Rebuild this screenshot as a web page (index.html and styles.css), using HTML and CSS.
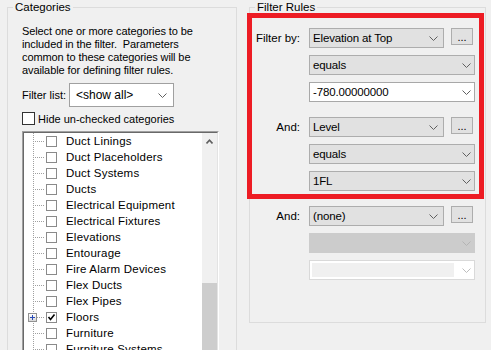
FILE: index.html
```html
<!DOCTYPE html>
<html lang="en">
<head>
    <meta charset="UTF-8">
    <title>Filters - Categories and Rules</title>
    <link rel="stylesheet" href="styles.css">
</head>
<body>
    <fieldset class="group categories">
        <legend>Categories</legend>
        <div class="group-body">
            <p class="hint">Select one or more categories to be<br>included in the filter.&nbsp; Parameters<br>common to these categories will be<br>available for defining filter rules.</p>
            <div class="filter-list">
                <span>Filter list:</span>
                <div class="select">
                    <span>&lt;show all&gt;</span>
                    <svg width="9" height="5" viewBox="0 0 9 5"><polyline points="0.5,0.5 4.5,4.5 8.5,0.5" fill="none" stroke="#606060"/></svg>
                </div>
            </div>
            <label class="check-row"><span class="box"></span>Hide un-checked categories</label>
            <div class="tree">
                <div class="tree-inner">
                    <ul class="tree-items">
                        <li><span class="cb"></span>Duct Linings</li>
                        <li><span class="cb"></span>Duct Placeholders</li>
                        <li><span class="cb"></span>Duct Systems</li>
                        <li><span class="cb"></span>Ducts</li>
                        <li><span class="cb"></span>Electrical Equipment</li>
                        <li><span class="cb"></span>Electrical Fixtures</li>
                        <li><span class="cb"></span>Elevations</li>
                        <li><span class="cb"></span>Entourage</li>
                        <li><span class="cb"></span>Fire Alarm Devices</li>
                        <li><span class="cb"></span>Flex Ducts</li>
                        <li><span class="cb"></span>Flex Pipes</li>
                        <li>
                            <span class="expander"><svg width="9" height="9" viewBox="0 0 9 9"><path d="M2 4.5h5M4.5 2v5" stroke="#2a4cb8" stroke-width="1"/></svg></span>
                            <span class="cb checked"><svg width="9" height="9" viewBox="0 0 9 9"><polyline points="1.5,4 3.5,6.5 7.5,1.5" fill="none" stroke="#000" stroke-width="1.6"/></svg></span>Floors
                        </li>
                        <li><span class="cb"></span>Furniture</li>
                        <li><span class="cb"></span>Furniture Systems</li>
                    </ul>
                    <div class="scrollbar">
                        <div class="scroll-up"><svg width="7" height="5" viewBox="0 0 7 5"><polyline points="0.5,4.5 3.5,1.2 6.5,4.5" fill="none" stroke="#606060" stroke-width="1.6"/></svg></div>
                        <div class="thumb"></div>
                    </div>
                </div>
            </div>
        </div>
    </fieldset>

    <fieldset class="group rules">
        <legend>Filter Rules</legend>
        <div class="group-body">
            <div class="rule">
                <span class="rule-label">Filter by:</span>
                <div class="combo short"><span>Elevation at Top</span><svg width="9" height="5" viewBox="0 0 9 5"><polyline points="0.5,0.5 4.5,4.5 8.5,0.5" fill="none" stroke="#606060"/></svg></div>
                <button class="more">...</button>
                <div class="combo wide"><span>equals</span><svg width="9" height="5" viewBox="0 0 9 5"><polyline points="0.5,0.5 4.5,4.5 8.5,0.5" fill="none" stroke="#606060"/></svg></div>
                <div class="combo wide edit"><span>-780.00000000</span><svg width="9" height="5" viewBox="0 0 9 5"><polyline points="0.5,0.5 4.5,4.5 8.5,0.5" fill="none" stroke="#606060"/></svg></div>
            </div>
            <div class="rule">
                <span class="rule-label">And:</span>
                <div class="combo short"><span>Level</span><svg width="9" height="5" viewBox="0 0 9 5"><polyline points="0.5,0.5 4.5,4.5 8.5,0.5" fill="none" stroke="#606060"/></svg></div>
                <button class="more">...</button>
                <div class="combo wide"><span>equals</span><svg width="9" height="5" viewBox="0 0 9 5"><polyline points="0.5,0.5 4.5,4.5 8.5,0.5" fill="none" stroke="#606060"/></svg></div>
                <div class="combo wide"><span>1FL</span><svg width="9" height="5" viewBox="0 0 9 5"><polyline points="0.5,0.5 4.5,4.5 8.5,0.5" fill="none" stroke="#606060"/></svg></div>
            </div>
            <div class="rule">
                <span class="rule-label">And:</span>
                <div class="combo short"><span>(none)</span><svg width="9" height="5" viewBox="0 0 9 5"><polyline points="0.5,0.5 4.5,4.5 8.5,0.5" fill="none" stroke="#606060"/></svg></div>
                <button class="more">...</button>
                <div class="combo wide disabled"><span></span><svg width="9" height="5" viewBox="0 0 9 5"><polyline points="0.5,0.5 4.5,4.5 8.5,0.5" fill="none" stroke="#b4b4b4"/></svg></div>
                <div class="combo wide edit disabled"><span class="blank"></span><svg width="9" height="5" viewBox="0 0 9 5"><polyline points="0.5,0.5 4.5,4.5 8.5,0.5" fill="none" stroke="#bdbdbd"/></svg></div>
            </div>
        </div>
    </fieldset>

    <div class="highlight"></div>
</body>
</html>
```

FILE: styles.css
```css
body {
    margin: 0;
    padding-left: 7px;
    height: 350px;
    overflow: hidden;
    display: flex;
    align-items: flex-start;
    gap: 12px;
    background-color: #f0f0f0;
    font-family: "Liberation Sans", Arial, sans-serif;
    font-size: 11px;
    color: #000;
}
.group {
    box-sizing: border-box;
    margin: 0;
    padding: 0;
    border: 1px solid #dcdcdc;
    min-inline-size: 0;
}
.group legend {
    margin-left: 5px;
    padding: 0 2px;
    line-height: 15px;
    font-size: 11.5px;
}
.categories {
    width: 230px;
    height: 420px;
}
.rules {
    width: 237px;
    height: 323px;
}
.categories .group-body {
    padding: 10px 0 0 14px;
}
.hint {
    margin: 0;
    line-height: 13px;
    letter-spacing: -0.1px;
}
.filter-list {
    display: flex;
    align-items: center;
    gap: 3px;
    margin-top: 6px;
}
.select {
    box-sizing: border-box;
    width: 105px;
    height: 24px;
    display: flex;
    align-items: center;
    justify-content: space-between;
    padding: 0 6px 0 6px;
    background-color: #fff;
    border: 1px solid #a0a0a0;
    font-size: 12px;
}
.check-row {
    display: flex;
    align-items: center;
    gap: 3px;
    margin-top: 5px;
    height: 13px;
}
.check-row .box {
    box-sizing: border-box;
    width: 13px;
    height: 13px;
    background-color: #fff;
    border: 1px solid #333;
}
.tree {
    margin-top: 6px;
    width: 197px;
    box-sizing: border-box;
    border: 1px solid;
    border-color: #a0a0a0 #fff #fff #a0a0a0;
}
.tree-inner {
    display: flex;
    border: 1px solid;
    border-color: #696969 #e3e3e3 #e3e3e3 #696969;
    height: 240px;
    background-color: #fff;
}
.tree-items {
    flex: 1;
    margin: 0;
    padding: 0;
    list-style: none;
    position: relative;
    background: repeating-linear-gradient(to bottom, #a0a0a0 0 1px, transparent 1px 2px) 9px 0 / 1px 100% no-repeat;
}
.tree-items li {
    position: relative;
    height: 16px;
    display: flex;
    align-items: center;
    font-size: 11.5px;
    letter-spacing: 0.2px;
}
.tree-items li::before {
    content: '';
    width: 10px;
    height: 1px;
    margin-left: 11px;
    background: repeating-linear-gradient(to right, #a0a0a0 0 1px, transparent 1px 2px);
}
.cb {
    box-sizing: border-box;
    width: 11px;
    height: 11px;
    margin: 0 9px 0 1px;
    border: 1px solid #8a8a8a;
    background-color: #fff;
    display: flex;
    align-items: center;
    justify-content: center;
}
.expander {
    position: absolute;
    left: 4px;
    top: 4px;
    box-sizing: border-box;
    width: 9px;
    height: 9px;
    border: 1px solid #919191;
    background: linear-gradient(#fff, #d8d8d8);
    display: flex;
}
.expander svg {
    margin: -1px;
}
.scrollbar {
    width: 15px;
    background-color: #f0f0f0;
    display: flex;
    flex-direction: column;
}
.scroll-up {
    height: 17px;
    display: flex;
    align-items: center;
    justify-content: center;
}
.thumb {
    margin-top: 133px;
    flex: 1;
    background-color: #cdcdcd;
}
.rules .group-body {
    padding-top: 13px;
}
.rule {
    display: grid;
    grid-template-columns: 50px 135px 22px;
    grid-auto-rows: 20px;
    column-gap: 9px;
    row-gap: 7px;
    margin-bottom: 15px;
}
.rule .combo.wide {
    grid-column: 2 / 4;
}
.rule-label {
    align-self: center;
    text-align: right;
    font-size: 11.5px;
}
.combo {
    box-sizing: border-box;
    display: flex;
    align-items: center;
    justify-content: space-between;
    padding: 0 5px 0 3px;
    background-color: #e1e1e1;
    border: 1px solid #adadad;
    font-size: 11.5px;
    letter-spacing: -0.15px;
}
.combo.wide {
    padding-right: 3px;
}
.combo.edit {
    background-color: #fff;
    border-color: #a8a8a8;
}
.combo.disabled {
    background-color: #cccccc;
    border-color: #cccccc;
}
.combo.edit.disabled {
    background-color: #fff;
    border-color: #d9d9d9;
    padding-left: 2px;
}
.combo .blank {
    width: 142px;
    height: 14px;
    background-color: #f0f0f0;
}
.rule .more {
    grid-column: 3;
    grid-row: 1;
    width: 22px;
    height: 17px;
    padding: 0;
    margin-left: -2px;
    box-sizing: border-box;
    background-color: #e1e1e1;
    border: 1px solid #adadad;
    font-family: inherit;
    font-size: 11px;
    line-height: 12px;
}
.highlight {
    position: absolute;
    left: 247px;
    top: 13px;
    width: 237px;
    height: 186px;
    box-sizing: border-box;
    border: 5px solid #ed1c24;
}
```
